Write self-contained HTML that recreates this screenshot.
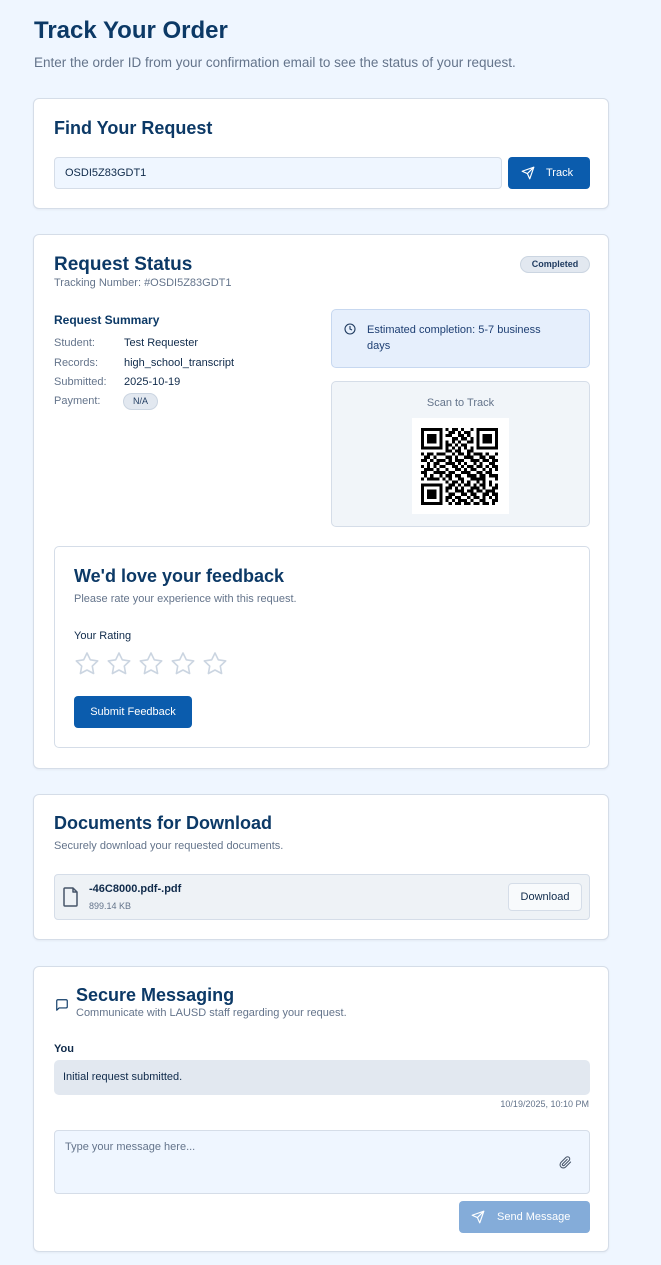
<!DOCTYPE html>
<html><head><meta charset="utf-8">
<style>
*{box-sizing:border-box;margin:0;padding:0}
body{width:661px;height:1265px;background:#eff6ff;font-family:"Liberation Sans",sans-serif;color:#0f3a68;position:relative;overflow:hidden}
.a{position:absolute}
.card{position:absolute;left:33px;width:576px;background:#fff;border:1px solid #d5dde8;border-radius:6px;box-shadow:0 1px 2px rgba(0,0,0,.05)}
.h{font-weight:bold;color:#0c3966}
.muted{color:#64748b}
.lbl{color:#64748b;font-size:11px}
.val{color:#0f2a4a;font-size:11px}
</style></head><body>
<div class="a h" style="left:34px;top:17px;font-size:24px">Track Your Order</div>
<div class="a muted" style="left:34px;top:55px;font-size:13.5px">Enter the order ID from your confirmation email to see the status of your request.</div>

<div class="card" style="top:98px;height:111px">
 <div class="a h" style="left:20px;top:19px;font-size:18px">Find Your Request</div>
 <div class="a" style="left:20px;top:58px;width:448px;height:32px;background:#eff6ff;border:1px solid #d5dde8;border-radius:4px;font-size:11px;padding:9px 10px;color:#0f2a4a">OSDI5Z83GDT1</div>
 <div class="a" style="left:474px;top:58px;width:82px;height:32px;background:#0b5cad;border-radius:4px;color:#fff;font-size:11px;padding-top:10px;padding-left:38px">Track</div>
 <svg class="a" style="left:487px;top:67px" width="14" height="14" viewBox="0 0 24 24" fill="none" stroke="#fff" stroke-width="2" stroke-linecap="round" stroke-linejoin="round"><path d="M22 2 11 13M22 2l-7 20-4-9-9-4z"/></svg>
</div>

<div class="card" style="top:234px;height:535px">
 <div class="a h" style="left:20px;top:19px;font-size:19px">Request Status</div>
 <div class="a lbl" style="left:20px;top:42px">Tracking Number: #OSDI5Z83GDT1</div>
 <div class="a" style="left:486px;top:21px;width:70px;height:17px;background:#e2e8f0;border:1px solid #cbd5e1;border-radius:9px;font-size:9px;font-weight:bold;text-align:center;line-height:15px;color:#1e3a5f">Completed</div>
 <div class="a h" style="left:20px;top:78px;font-size:12px">Request Summary</div>
 <div class="a lbl" style="left:20px;top:102px">Student:</div><div class="a val" style="left:90px;top:102px">Test Requester</div>
 <div class="a lbl" style="left:20px;top:122px">Records:</div><div class="a val" style="left:90px;top:122px">high_school_transcript</div>
 <div class="a lbl" style="left:20px;top:141px">Submitted:</div><div class="a val" style="left:90px;top:141px">2025-10-19</div>
 <div class="a lbl" style="left:20px;top:160px">Payment:</div>
 <div class="a" style="left:89px;top:158px;width:35px;height:17px;background:#e2e8f0;border:1px solid #cbd5e1;border-radius:9px;font-size:9px;text-align:center;line-height:15px;color:#1e3a5f">N/A</div>
 <div class="a" style="left:297px;top:74px;width:259px;height:59px;background:#e6effc;border:1px solid #c7d8f0;border-radius:5px"></div>
 <svg class="a" style="left:310px;top:88px" width="12" height="12" viewBox="0 0 24 24" fill="none" stroke="#1e3a5f" stroke-width="2.2"><circle cx="12" cy="12" r="10"/><path d="M12 6v6l4 2"/></svg>
 <div class="a" style="left:333px;top:87px;font-size:11px;line-height:16px;color:#1e3f73;width:195px">Estimated completion: 5-7 business days</div>
 <div class="a" style="left:297px;top:146px;width:259px;height:146px;background:#f1f5f9;border:1px solid #d5dde8;border-radius:5px">
  <div class="a muted" style="left:0;width:257px;text-align:center;top:15px;font-size:11px">Scan to Track</div>
  <div class="a" style="left:80px;top:36px;width:97px;height:96px;background:#fff"></div>
  <svg id="qr" class="a" style="left:89px;top:46px" width="77" height="77" viewBox="0 0 25 25" shape-rendering="crispEdges"></svg>
 </div>
 <div class="a" style="left:20px;top:311px;width:536px;height:202px;border:1px solid #d5dde8;border-radius:5px">
  <div class="a h" style="left:19px;top:19px;font-size:18px">We'd love your feedback</div>
  <div class="a muted" style="left:19px;top:46px;font-size:11px">Please rate your experience with this request.</div>
  <div class="a" style="left:19px;top:83px;font-size:11px;color:#0f2a4a">Your Rating</div>
  <svg class="a" style="left:19px;top:104px" width="160" height="26" viewBox="0 0 160 26" fill="none" stroke="#cbd5e1" stroke-width="1.6" stroke-linejoin="round">
   <g id="st"><path d="M13 2l3.3 6.8 7.4 1.1-5.4 5.2 1.3 7.4L13 19l-6.6 3.5 1.3-7.4-5.4-5.2 7.4-1.1z"/></g>
   <use href="#st" x="32"/><use href="#st" x="64"/><use href="#st" x="96"/><use href="#st" x="128"/>
  </svg>
  <div class="a" style="left:19px;top:149px;width:118px;height:32px;background:#0b5cad;border-radius:4px;color:#fff;font-size:11px;text-align:center;line-height:32px">Submit Feedback</div>
 </div>
</div>

<div class="card" style="top:794px;height:146px">
 <div class="a h" style="left:20px;top:18px;font-size:18px">Documents for Download</div>
 <div class="a muted" style="left:20px;top:45px;font-size:11px">Securely download your requested documents.</div>
 <div class="a" style="left:20px;top:79px;width:536px;height:46px;background:#eef2f6;border:1px solid #d5dde8;border-radius:4px">
  <svg class="a" style="left:8px;top:12px" width="16" height="20" viewBox="0 0 16 20" fill="none" stroke="#475569" stroke-width="1.5" stroke-linejoin="round"><path d="M2 1h8l4 4v13a1 1 0 0 1-1 1H2a1 1 0 0 1-1-1V2a1 1 0 0 1 1-1zM10 1v4h4"/></svg>
  <div class="a" style="left:34px;top:8px;font-size:11px;font-weight:bold;color:#0f2a4a">-46C8000.pdf-.pdf</div>
  <div class="a muted" style="left:34px;top:26px;font-size:9px">899.14 KB</div>
  <div class="a" style="left:453px;top:8px;width:74px;height:28px;background:#f8fafc;border:1px solid #d5dde8;border-radius:4px;font-size:11px;text-align:center;line-height:26px;color:#0f2a4a">Download</div>
 </div>
</div>

<div class="card" style="top:966px;height:286px">
 <svg class="a" style="left:21px;top:31px" width="14" height="14" viewBox="0 0 24 24" fill="none" stroke="#0c3966" stroke-width="2" stroke-linejoin="round"><path d="M21 15a2 2 0 0 1-2 2H7l-4 4V5a2 2 0 0 1 2-2h14a2 2 0 0 1 2 2z"/></svg>
 <div class="a h" style="left:42px;top:18px;font-size:18px">Secure Messaging</div>
 <div class="a muted" style="left:42px;top:40px;font-size:11px">Communicate with LAUSD staff regarding your request.</div>
 <div class="a" style="left:20px;top:76px;font-size:11px;font-weight:bold;color:#0f2a4a">You</div>
 <div class="a" style="left:20px;top:93px;width:536px;height:35px;background:#e2e8f0;border-radius:5px;font-size:11px;padding:11px 9px;color:#0f2a4a">Initial request submitted.</div>
 <div class="a muted" style="right:19px;top:132px;font-size:9px">10/19/2025, 10:10 PM</div>
 <div class="a" style="left:20px;top:163px;width:536px;height:64px;background:#eff6ff;border:1px solid #d5dde8;border-radius:4px;font-size:11px;padding:10px 10px;color:#64748b">Type your message here...</div>
 <svg class="a" style="left:525px;top:189px" width="13" height="13" viewBox="0 0 24 24" fill="none" stroke="#475569" stroke-width="2" stroke-linecap="round"><path d="M21.4 11.1l-9.2 9.2a6 6 0 0 1-8.5-8.5l9.2-9.2a4 4 0 0 1 5.7 5.7l-9.2 9.2a2 2 0 0 1-2.8-2.8l8.5-8.5"/></svg>
 <div class="a" style="left:425px;top:234px;width:131px;height:32px;background:#84acd9;border-radius:4px;color:#fff;font-size:11px;padding-top:10px;padding-left:38px">Send Message</div>
 <svg class="a" style="left:437px;top:243px" width="14" height="14" viewBox="0 0 24 24" fill="none" stroke="#fff" stroke-width="2" stroke-linecap="round" stroke-linejoin="round"><path d="M22 2 11 13M22 2l-7 20-4-9-9-4z"/></svg>
</div>

<script>
var r=["1111111010110100101111111","1000001001101011001000001","1011101011001101001011101","1011101000110110101011101","1011101010101001101011101","1000001011010110001000001","1111111010101010101111111","0000000011011001100000000","1011011100101101011101001","0110100011010011100110110","1101011101011100111011011","0010110011101010010100110","1010101100110101101101011","0111010010011010110010101","1100111101100111001101100","0101001011011001110110111","1011110101001100111110001","0000000010110101001010100","1111111001101011010110101","1000001011010100111010011","1011101010011101101101110","1011101001100110110011011","1011101011011001011010101","1000001010101110100110011","1111111001011011011011010"];
var s="";for(var y=0;y<25;y++)for(var x=0;x<25;x++)if(r[y][x]=="1")s+="M"+x+" "+y+"h1v1h-1z";
document.getElementById("qr").innerHTML='<path fill="#000" d="'+s+'"/>';
</script>
</body></html>
